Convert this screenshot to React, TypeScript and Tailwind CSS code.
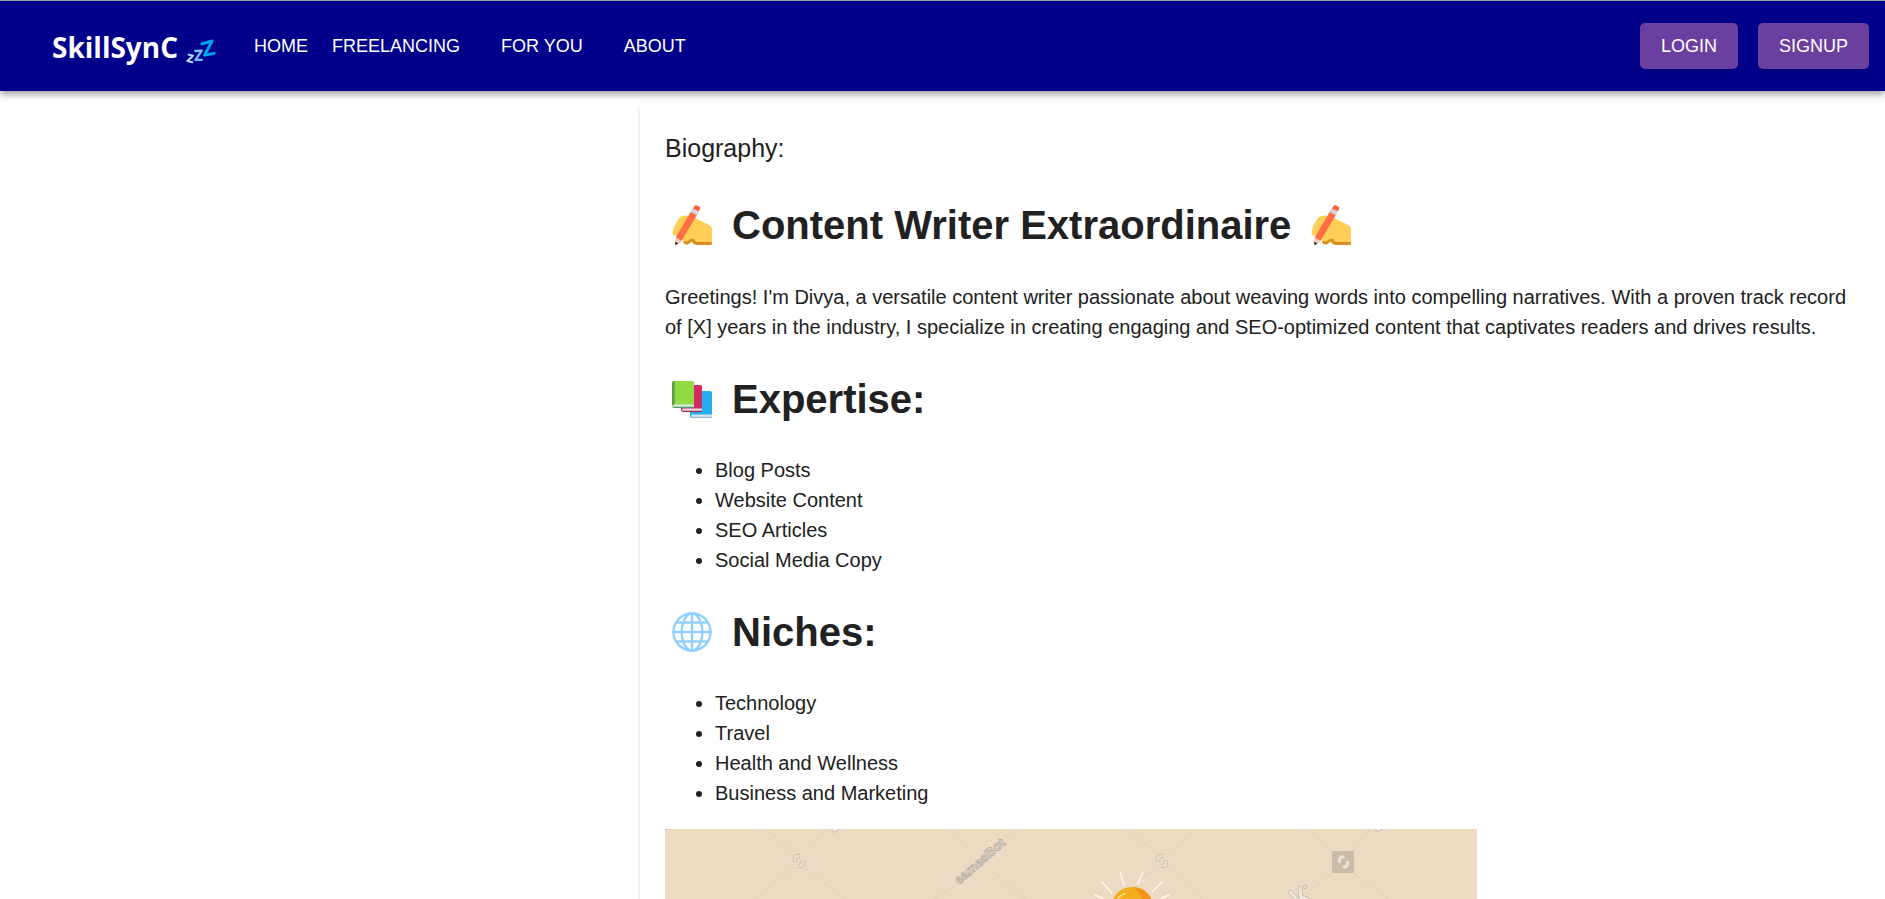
import React from "react";

const navLinks = [
  { label: "HOME", spacing: "mr-6" },
  { label: "FREELANCING", spacing: "mr-[41px]" },
  { label: "FOR YOU", spacing: "mr-[41px]" },
  { label: "ABOUT", spacing: "" },
];

const expertise = ["Blog Posts", "Website Content", "SEO Articles", "Social Media Copy"];
const niches = ["Technology", "Travel", "Health and Wellness", "Business and Marketing"];

function SleepIcon() {
  return (
    <svg viewBox="0 0 30 25" className="h-[25px] w-[30px]" fill="none" strokeLinecap="round" strokeLinejoin="round" aria-hidden="true">
      <path d="M15.8 4.800 L26.200 2 L18.500 16.200 L28.200 14.300" stroke="#00A6ED" strokeWidth="2.900" />
      <path d="M9.300 12 L15.700 11.600 L9.500 20.800 L15.800 20.800" stroke="#75BFFF" strokeWidth="2.300" />
      <path d="M2.600 15.600 L7 16.800 L1.400 22 L6.300 23.200" stroke="#B4DEFF" strokeWidth="2" />
    </svg>
  );
}

function WritingHandIcon() {
  return (
    <svg viewBox="0 0 40 40" className="h-10 w-10 shrink-0" aria-hidden="true">
      <path d="M11 35.5 L15 32 L40 34 V38.5 Q40 40 38.500 40 H25 Q22 40 19.500 36.500 Q16.500 40.500 12.500 39 Q11 38 11 35.500Z" fill="#D98F1F" />
      <path d="M1.500 24 C3 19 6 13.500 9 11.500 Q13 9.500 17.500 11.500 L23 13 L37.500 20.300 Q40 21.500 40 24 V37 H25.500 Q23 36.500 21.500 33.500 L18 34.500 Q14 38 11 35.500 L7 30.500 H2 Q-.5 29 1.500 24Z" fill="#FFCE56" />
      <path d="M19.500 5.500 L25.500 9 L9.500 36 L4 39.800 L3.300 39 L4 32Z" fill="#FF6D42" />
      <path d="M4.200 32.500 L9.500 35.800 L4.200 40 L3.200 39.500Z" fill="#F7C5BA" />
      <path d="M3.400 36.800 L6.400 38.500 L3.700 40 Q3 39.700 3.400 36.800Z" fill="#212121" />
      <path d="M21 2.800 L27 6 L24.600 10.300 L18.600 7Z" fill="#D3D3DA" />
      <path d="M22.400 1.300 Q23.300 -.3 25 .5 L27.300 1.800 Q28.700 2.700 27.800 4.200 L26.700 6.200 L21 3.500Z" fill="#FF5C32" />
      <path d="M17.800 22.500 L21 24.500 Q20 31 14 34.500 L10.800 34Z" fill="#FFCE56" />
    </svg>
  );
}

function BooksIcon() {
  return (
    <svg viewBox="0 0 40 40" className="h-10 w-10 shrink-0" aria-hidden="true">
      <path d="M18 13.500 Q18 12 20 12 H38 Q40 12 40 14 V37.500 Q40 39 38.500 39 H20 Q18 39 18 37Z" fill="#26ADEF" />
      <path d="M19.500 35.500 H40 V38 H20 Q18.500 37.500 19.500 35.500Z" fill="#DCE6EE" />
      <path d="M19 37.800 H40 V39 H20Z" fill="#9DBBD1" />
      <path d="M9 8 Q9 6 11 6 H28.500 Q30 6 30 7.500 V32 Q30 33 29 33 H11 Q9 33 9 31Z" fill="#D12B61" />
      <path d="M10.500 29.500 H30 V32 H10.500 Q9.500 31 10.500 29.500Z" fill="#E8DADF" />
      <path d="M10 31.800 H30 V33 H11Z" fill="#9E2851" />
      <path d="M0 4 Q0 2 2 2 H20 Q22 2 22 3.500 V28 Q22 29 20.500 29 H2 Q0 29 0 27Z" fill="#93DB43" />
      <path d="M0 4 Q0 2 2.700 2 V26 H0Z" fill="#5D9E45" />
      <path d="M1.500 25.500 H22 V28 H1.500 Q.5 27 1.500 25.500Z" fill="#DDE5DF" />
      <path d="M.5 27.800 H22 V29 H2Z" fill="#55976C" />
    </svg>
  );
}

function GlobeIcon() {
  return (
    <svg viewBox="0 0 40 40" className="h-10 w-10 shrink-0" fill="none" stroke="#92D1FF" strokeWidth="2.400" aria-hidden="true">
      <circle cx="20" cy="20" r="18.600" />
      <ellipse cx="20" cy="20" rx="10.300" ry="18.600" />
      <path d="M20 1 V39 M1 20 H39 M4.500 10.500 H35.500 M4.500 29.500 H35.500" />
    </svg>
  );
}

function StockMark({ x, y }: { x: number; y: number }) {
  return (
    <g transform={`translate(${x} ${y})`} fill="none" strokeLinecap="butt" strokeLinejoin="round">
      <path d="M-4 1 V-1.500 Q-4 -5 -.5 -5 H1 M4 -1 V1.500 Q4 5 .5 5 H-1" stroke="#CDBFAC" strokeWidth="4.500" />
      <path d="M-4 .5 V-1.500 Q-4 -5 -.5 -5 H.5 M4 -.5 V1.500 Q4 5 .5 5 H-.5" stroke="#EADFCE" strokeWidth="2.700" />
    </g>
  );
}

function StockPicture() {
  return (
    <svg viewBox="0 0 812 100" className="block h-auto w-full max-w-[812px] bg-[#ecdac2]" role="img" aria-label="Light bulb illustration">
      <path
        d="M100 0 L128 23 M162 0 L140 25 M128 39 L90 70 M140 39 L180 70 M280 0 L306 22 M352 0 L338 13 M328 43 L360 70 M292 56 L270 70 M462 0 L492 24 M532 0 L502 25 M491 39 L477 49 M503 39 L537 70 M642 0 L668 22 M705 0 L688 22 M667 44 L640 65 M689 44 L723 70"
        stroke="#E2D1BA"
        strokeWidth="1"
        fill="none"
      />
      <StockMark x={134} y={32} />
      <StockMark x={497} y={32} />
      <rect x="667" y="22" width="22" height="22" fill="#CBBCA7" />
      <g transform="translate(678.500 33)" fill="none" stroke="#E8E2DA" strokeWidth="3">
        <path d="M-4 1 V-1.500 Q-4 -5 -.5 -5 H1 M4 -1 V1.500 Q4 5 .5 5 H-1" />
      </g>
      <path d="M167 0 Q167 4 170 3 L175 0" fill="#F0E7DB" stroke="#C8BCAC" />
      <path d="M711 0 V3 L718 0" fill="#F4EEE5" stroke="#C8BCAC" />
      <path d="M0 0 H3" stroke="#B5AA9C" />
      <text
        transform="translate(294 56) rotate(-41)"
        fontFamily="Liberation Sans, sans-serif"
        fontSize="13"
        fontWeight="700"
        fill="#E9E2D8"
        stroke="#A9A39B"
        strokeWidth="0.700"
      >
        eamesBot
      </text>
      <g fill="none" strokeLinecap="round">
        <path d="M625 63 L634 72 M635 59 L636 71 M636 68 L642 70" stroke="#C8BCAC" strokeWidth="4.500" />
        <path d="M625 63 L634 72 M635 59 L636 71 M636 68 L642 70" stroke="#F1E9DE" strokeWidth="2.800" />
        <circle cx="640" cy="58" r="1.800" stroke="#C8BCAC" strokeWidth="1" />
      </g>
      <path
        d="M455 43 L459 56 M478 43 L473 55 M437 53 L447 64 M497 53 L487 63 M430 66 L437 69 M504 66 L497 69"
        stroke="#FFF9EC"
        strokeWidth="1.500"
        strokeLinecap="round"
      />
      <circle cx="467" cy="79" r="21" fill="#F4AD1D" />
      <path d="M467 58 Q482 58 487 72 H478 Q474 61 467 58Z" fill="#F1941C" />
      <path d="M453 69 L456 66.500 M458 65.500 L460 64.500" stroke="#FFE9A8" strokeWidth="1.500" strokeLinecap="round" />
    </svg>
  );
}

function Heading({ icon, trailing, children }: { icon: React.ReactNode; trailing?: React.ReactNode; children: React.ReactNode }) {
  return (
    <h1 className="mt-[27px] flex h-[60px] items-center gap-5 pl-[7px] text-[40px] leading-[60px] font-bold">
      {icon}
      <span>{children}</span>
      {trailing}
    </h1>
  );
}

function BulletList({ items }: { items: string[] }) {
  return (
    <ul className="mt-[26px] list-disc pl-[50px]">
      {items.map((item) => (
        <li key={item}>{item}</li>
      ))}
    </ul>
  );
}

export default function App() {
  return (
    <div className="h-screen overflow-hidden bg-white font-['Liberation_Sans',Arial,sans-serif] text-xl leading-[30px] text-[#212121]">
      <header className="flex h-[91px] items-center border-t border-[#8fa9a5] bg-[#00008b] pr-4 pl-[52px] text-lg text-white shadow-[0_3px_5px_-1px_rgba(0,0,0,0.2),0_5px_6px_0_rgba(0,0,0,0.14),0_1px_12px_0_rgba(0,0,0,0.12)]">
        <a href="#" className="mr-[38px] flex items-center gap-2 pt-[2px]" aria-label="SkillSynC">
          <span className="font-['Open_Sans','Noto_Sans',sans-serif] text-[28px] leading-10 font-bold">SkillSynC</span>
          <span className="pt-2">
            <SleepIcon />
          </span>
        </a>
        <nav className="flex items-center">
          {navLinks.map((link) => (
            <a key={link.label} href="#" className={link.spacing}>
              {link.label}
            </a>
          ))}
        </nav>
        <div className="ml-auto flex gap-5">
          <button type="button" className="h-[46px] rounded-[5px] bg-[#6b3fa0] px-[21px] shadow-md">
            LOGIN
          </button>
          <button type="button" className="h-[46px] rounded-[5px] bg-[#6b3fa0] px-[21px] shadow-md">
            SIGNUP
          </button>
        </div>
      </header>

      <main className="grid grid-cols-[640px_minmax(0,1fr)] pt-3">
        <article className="col-start-2 rounded-l-[5px] bg-white pt-[25px] pb-[25px] pl-[25px] shadow-[0_3px_1px_-2px_rgba(0,0,0,0.2),0_1px_1px_0_rgba(0,0,0,0.14),0_1px_4px_0_rgba(0,0,0,0.12)]">
          <h2 className="text-[25px] leading-10">Biography:</h2>
          <Heading icon={<WritingHandIcon />} trailing={<WritingHandIcon />}>
            Content Writer Extraordinaire
          </Heading>
          <p className="mt-[27px]">
            Greetings! I'm Divya, a versatile content writer passionate about weaving words into compelling narratives. With a proven track record
            <br />
            of [X] years in the industry, I specialize in creating engaging and SEO-optimized content that captivates readers and drives results.
          </p>
          <Heading icon={<BooksIcon />}>Expertise:</Heading>
          <BulletList items={expertise} />
          <Heading icon={<GlobeIcon />}>Niches:</Heading>
          <BulletList items={niches} />
          <figure className="mt-[21px]">
            <StockPicture />
          </figure>
        </article>
      </main>
    </div>
  );
}
